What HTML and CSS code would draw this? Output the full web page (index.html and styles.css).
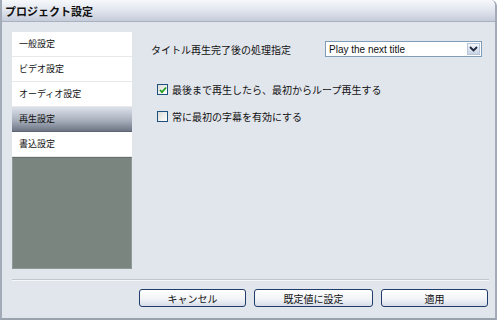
FILE: index.html
```html
<!DOCTYPE html>
<html lang="ja">
<head>
  <meta charset="UTF-8">
  <title>プロジェクト設定</title>
  <link rel="stylesheet" href="styles.css">
</head>
<body>
  <div class="window">
    <!-- Title bar -->
    <div class="titlebar">プロジェクト設定</div>

    <div class="content">
      <!-- Left menu -->
      <ul class="sidebar">
        <li class="item">一般設定</li>
        <li class="item">ビデオ設定</li>
        <li class="item">オーディオ設定</li>
        <li class="item selected">再生設定</li>
        <li class="item">書込設定</li>
        <li class="filler"></li>
      </ul>

      <!-- Settings -->
      <div class="main">
        <div class="row">
          <span class="label">タイトル再生完了後の処理指定</span>
          <div class="select">
            <span class="select_text">Play the next title</span>
            <span class="select_arrow">
              <svg width="9" height="6" viewBox="0 0 9 6"><path d="M1 1 L4.5 4.5 L8 1" fill="none" stroke="#1e2a40" stroke-width="1.8"/></svg>
            </span>
          </div>
        </div>
        <label class="check_row first">
          <span class="check on">
            <svg width="8" height="8" viewBox="0 0 8 8"><path d="M1 4 L3 6.2 L7 1.5" fill="none" stroke="#21a121" stroke-width="1.8"/></svg>
          </span>
          最後まで再生したら、最初からループ再生する
        </label>
        <label class="check_row">
          <span class="check"></span>
          常に最初の字幕を有効にする
        </label>
      </div>
    </div>

    <div class="separator"></div>

    <div class="buttons">
      <button class="btn">キャンセル</button>
      <button class="btn wide">既定値に設定</button>
      <button class="btn">適用</button>
    </div>
  </div>
</body>
</html>
```

FILE: styles.css
```css
/* Base */
body {
  margin: 0;
  padding: 0;
  background-color: #ffffff;
  font-family: "Noto Sans CJK JP", "DejaVu Sans", sans-serif;
  font-size: 10px;
  color: #111111;
}

/* Window frame */
.window {
  width: 493px;
  height: 318px;
  background-color: #e1e5ec;
  border-left: 2px solid #a3abb8;
  border-right: 2px solid #a3abb8;
  border-bottom: 2px solid #9aa2ae;
  border-top-right-radius: 6px;
  display: flex;
  flex-direction: column;
  overflow: hidden;
}
.titlebar {
  height: 21px;
  line-height: 22px;
  padding-left: 3px;
  font-size: 11px;
  font-weight: bold;
  color: #101010;
  background: linear-gradient(#f6f8fb, #e3e7ef 45%, #c5ccda);
  border-bottom: 1px solid #a9b1bf;
}

/* Content area */
.content {
  display: flex;
  padding: 10px 10px 0 10px;
  height: 237px;
}
.sidebar {
  list-style: none;
  margin: 0;
  padding: 0;
  width: 120px;
  display: flex;
  flex-direction: column;
  background-color: #ffffff;
}
.sidebar .item {
  height: 24px;
  line-height: 24px;
  padding-left: 7px;
  border-bottom: 1px solid #e6e8ec;
  font-size: 9px;
}
.sidebar .selected {
  background: linear-gradient(#dde1ea, #a9b0bd 55%, #6e7686);
  border-bottom: 1px solid #5d6574;
}
.sidebar .filler {
  flex: 1;
  background-color: #7a8580;
  border: 1px solid #8e9894;
  border-top: 1px solid #65706b;
}

.main {
  flex: 1;
  padding: 9px 3px 0 19px;
}
.row {
  display: flex;
  align-items: center;
  justify-content: space-between;
}
.label {
  font-size: 10px;
}
.select {
  width: 155px;
  height: 14px;
  display: flex;
  align-items: center;
  background-color: #ffffff;
  border: 1px solid #7f9db9;
}
.select_text {
  flex: 1;
  padding-left: 3px;
  font-family: "Liberation Sans", sans-serif;
  font-size: 10px;
}
.select_arrow {
  width: 13px;
  height: 12px;
  margin-right: 1px;
  display: flex;
  align-items: center;
  justify-content: center;
  background: linear-gradient(#f4f6fa, #c9d3e6);
  border: 1px solid #b8c6dc;
  box-sizing: border-box;
}

/* Checkboxes */
.check_row {
  display: flex;
  align-items: center;
  gap: 4px;
  margin-left: 6px;
  margin-top: 12px;
  font-size: 10px;
}
.check_row.first {
  margin-top: 25px;
}
.check {
  width: 9px;
  height: 9px;
  border: 1px solid #1c5180;
  background: linear-gradient(135deg, #dcdcd6, #ffffff);
  display: flex;
  align-items: center;
  justify-content: center;
}

/* Bottom */
.separator {
  margin: 10px 6px 0 10px;
  border-top: 1px solid #c2c7cf;
  border-bottom: 1px solid #f5f6f8;
}
.buttons {
  display: flex;
  justify-content: flex-end;
  gap: 8px;
  padding: 8px 7px 0 0;
}
.btn {
  width: 107px;
  height: 18px;
  padding: 0;
  font-family: "Noto Sans CJK JP", sans-serif;
  font-size: 10px;
  color: #111111;
  background: linear-gradient(#ffffff, #f0f2f6 60%, #d6dde9);
  border: 1px solid #1f3c6a;
  border-radius: 3px;
}
.btn.wide {
  width: 119px;
}
```
